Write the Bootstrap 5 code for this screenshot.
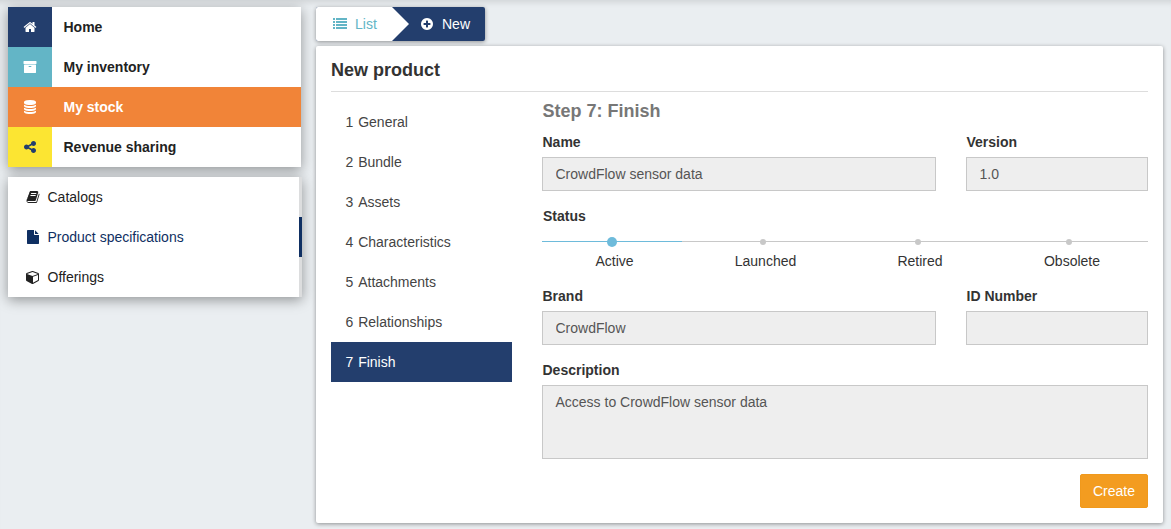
<!DOCTYPE html>
<html lang="en">
<head>
<meta charset="utf-8">
<meta name="viewport" content="width=device-width, initial-scale=1">
<title>New product</title>
<link href="https://cdn.jsdelivr.net/npm/bootstrap@5.3.0/dist/css/bootstrap.min.css" rel="stylesheet">
<style>
body{font:14px/20px "Liberation Sans",Arial,sans-serif;color:#333;background:#eaeef1;height:529px;overflow:hidden;padding:7px 8px 0;box-shadow:inset 0 7px 6px -5px rgba(0,0,0,.12)}
.ico{width:14px;height:14px;fill:currentColor;flex:none;display:block}
.side{width:293px;flex:none}
.main-col{width:847px;flex:none;margin-left:15px}
.menu-box{background:#fff;box-shadow:0 3px 12px rgba(0,0,0,.38)}
.menu-box a{height:40px;color:#222;text-decoration:none}
.areas a{font-weight:700}
.tile{width:44px;height:40px;color:#fff;margin-right:11.5px}
.navy{background:#233e6d}.teal{background:#63b5c6}.yellow{background:#fce532;color:#233e6d}
.areas a.current{background:#f18438;color:#fff}
.subs{margin-top:10px;width:294px}
.subs a{padding-left:17.5px;gap:8px;border-right:3px solid #dcddde}
.subs a.current{color:#0f2f62;border-color:#0f2f62}
.crumbs{width:169px;height:34px;border-radius:2px;overflow:hidden;background:#233e6d}
.crumb-wrap{width:169px;border-radius:2px;box-shadow:0 1px 4px rgba(0,0,0,.4)}
.crumb-list{width:93px;background:#fff;color:#63b5c6;padding-left:17px;gap:8px;clip-path:polygon(0 0,76px 0,93px 50%,76px 100%,0 100%)}
.crumb-new{color:#fff;padding-left:11px;gap:8px}
.panel{height:477px;margin-top:5px;background:#fff;border-radius:2px;box-shadow:0 1px 4px rgba(0,0,0,.4);padding:0 15px}
.panel h1{font-size:18px;line-height:20px;font-weight:700;margin:0;padding:14px 0 11px;border-bottom:1px solid #ddd}
.steps{width:181px;flex:none;padding-top:10px}
.steps div{height:40px;padding:10px 14.5px;color:#444;word-spacing:1px}
.steps div.current{background:#233e6d;color:#fff}
.form-area{width:606px;margin-left:30px;padding-top:9px}
.form-area h2{font-size:18px;line-height:20px;font-weight:700;margin:0 0 11px .5px;color:#777}
.form-area label{display:block;font-weight:700;line-height:20px;margin:0 0 5px .5px}
.form-area .form-control{height:34px;font-size:14px;line-height:20px;padding:6px 12px 6px 12.5px;border:1px solid #c8c8c8;border-radius:0;background:#eee;color:#555;resize:none;box-shadow:none}
.form-area textarea.form-control{height:74px}
.wide{width:394px}.narrow{width:182px}
.form-row{padding-top:15px}
.form-area .status-label{margin:0 0 15px 1px}
.track div{text-align:center;border-top:1px solid #c8c8c8;position:relative;padding:9px 0 0 5px;height:30px}
.track div::before{content:"";position:absolute;left:50%;top:-3px;width:6px;height:6px;margin-left:-3px;border-radius:50%;background:#c8c8c8}
.track div.current{border-color:#6ebbdb}
.track div.current::before{width:10px;height:10px;top:-5px;margin-left:-5px;background:#6ebbdb}
.s1{width:140px}.s2{width:162px}.s3{width:148px}.s4{width:156px}
.track .s3,.track .s4{padding-left:4px}
.track .s4::before{margin-left:-4px}
.btn-create{background:#f39c20;color:#fff;font-size:14px;line-height:20px;height:34px;width:68px;padding:6px 0;border:1px solid #f0991c;border-radius:2px}
</style>
</head>
<body>
<div class="d-flex align-items-start">
  <aside class="side">
    <nav class="menu-box areas">
      <a href="#" class="d-flex align-items-center"><span class="tile navy d-flex align-items-center justify-content-center"><svg class="ico" viewBox="0 0 1792 1792"><path d="M1472 992v480q0 26-19 45t-45 19h-384v-384h-256v384h-384q-26 0-45-19t-19-45v-480q0-1 .5-3t.5-3l575-474 575 474q1 2 1 6zm223-69l-62 74q-8 9-21 11h-3q-13 0-21-7l-692-577-692 577q-12 8-24 7-13-2-21-11l-62-74q-8-10-7-23.500t11-21.500l719-599q32-26 76-26t76 26l244 204v-195q0-14 9-23t23-9h192q14 0 23 9t9 23v408l219 182q10 8 11 21.500t-7 23.500z"/></svg></span>Home</a>
      <a href="#" class="d-flex align-items-center"><span class="tile teal d-flex align-items-center justify-content-center"><svg class="ico" viewBox="0 0 1792 1792"><path d="M1088 832q0-26-19-45t-45-19h-256q-26 0-45 19t-19 45 19 45 45 19h256q26 0 45-19t19-45zm576-192v960q0 26-19 45t-45 19h-1408q-26 0-45-19t-19-45v-960q0-26 19-45t45-19h1408q26 0 45 19t19 45zm64-448v256q0 26-19 45t-45 19h-1536q-26 0-45-19t-19-45v-256q0-26 19-45t45-19h1536q26 0 45 19t19 45z"/></svg></span>My inventory</a>
      <a href="#" class="d-flex align-items-center current"><span class="tile d-flex align-items-center justify-content-center"><svg class="ico" viewBox="0 0 1792 1792"><path d="M896 768q237 0 443-43t325-127v170q0 69-103 128t-280 93.500-385 34.500-385-34.500-280-93.500-103-128v-170q119 84 325 127t443 43zm0 768q237 0 443-43t325-127v170q0 69-103 128t-280 93.500-385 34.500-385-34.500-280-93.500-103-128v-170q119 84 325 127t443 43zm0-384q237 0 443-43t325-127v170q0 69-103 128t-280 93.500-385 34.500-385-34.500-280-93.500-103-128v-170q119 84 325 127t443 43zm0-1152q208 0 385 34.500t280 93.500 103 128v128q0 69-103 128t-280 93.500-385 34.500-385-34.500-280-93.500-103-128v-128q0-69 103-128t280-93.500 385-34.500z"/></svg></span>My stock</a>
      <a href="#" class="d-flex align-items-center"><span class="tile yellow d-flex align-items-center justify-content-center"><svg class="ico" viewBox="0 0 1792 1792"><path d="M1344 1024q133 0 226.500 93.500t93.500 226.500-93.500 226.500-226.500 93.500-226.500-93.500-93.500-226.500q0-12 2-34l-360-180q-92 86-218 86-133 0-226.500-93.500t-93.500-226.500 93.500-226.500 226.500-93.500q126 0 218 86l360-180q-2-22-2-34 0-133 93.500-226.500t226.500-93.500 226.500 93.500 93.500 226.500-93.500 226.500-226.500 93.500q-126 0-218-86l-360 180q2 22 2 34t-2 34l360 180q92-86 218-86z"/></svg></span>Revenue sharing</a>
    </nav>
    <nav class="menu-box subs">
      <a href="#" class="d-flex align-items-center"><svg class="ico" viewBox="0 0 1792 1792"><path d="M1703 478q40 57 18 129l-275 906q-19 64-76.500 107.500t-122.500 43.500h-923q-77 0-148.500-53.500t-99.500-131.500q-24-67-2-127 0-4 3-27t4-37q1-8-3-21.500t-3-19.500q2-11 8-21t16.500-23.500 16.500-23.500q23-38 45-91.500t30-91.500q3-10 .5-30t-.5-28q3-11 17-28t17-23q21-36 42-92t25-90q1-9-2.500-32t.5-28q4-13 22-30.500t22-22.500q19-26 42.500-84.500t27.500-96.500q1-8-3-25.500t-2-26.500q2-8 9-18t18-23 17-21q8-12 16.500-30.500t15-35 16-36 19.500-32 26.500-23.500 36-11.500 47.500 5.500l-1 3q38-9 51-9h761q74 0 114 56t18 130l-274 906q-36 119-71.500 153.500t-128.500 34.500h-869q-27 0-38 15-11 16-1 43 24 70 144 70h923q29 0 56-15.500t35-41.500l300-987q7-22 5-57 38 15 59 43zm-1064 2q-4 13 2 22.500t20 9.500h608q13 0 25.500-9.500t16.500-22.500l21-64q4-13-2-22.500t-20-9.500h-608q-13 0-25.500 9.500t-16.500 22.500zm-83 256q-4 13 2 22.500t20 9.500h608q13 0 25.500-9.500t16.500-22.500l21-64q4-13-2-22.500t-20-9.500h-608q-13 0-25.500 9.500t-16.500 22.500z"/></svg>Catalogs</a>
      <a href="#" class="d-flex align-items-center current"><svg class="ico" viewBox="0 0 1792 1792"><path d="M1152 512v-472q22 14 36 28l408 408q14 14 28 36h-472zm-128 32q0 40 28 68t68 28h544v1056q0 40-28 68t-68 28h-1344q-40 0-68-28t-28-68v-1600q0-40 28-68t68-28h800v544z"/></svg>Product specifications</a>
      <a href="#" class="d-flex align-items-center"><svg class="ico" viewBox="0 0 1792 1792"><path d="M896 1629l640-349v-636l-640 233v752zm-64-865l698-254-698-254-698 254zm832-252v768q0 35-18 65t-49 47l-704 384q-28 16-61 16t-61-16l-704-384q-31-17-49-47t-18-65v-768q0-40 23-73t61-47l704-256q22-8 44-8t44 8l704 256q38 14 61 47t23 73z"/></svg>Offerings</a>
    </nav>
  </aside>
  <main class="main-col">
    <div class="crumb-wrap"><div class="crumbs d-flex">
      <div class="crumb-list d-flex align-items-center"><svg class="ico" viewBox="0 0 14 14"><path d="M0 1h2v2H0zM3 1h11v2H3zM0 4h2v2H0zM3 4h11v2H3zM0 7h2v2H0zM3 7h11v2H3zM0 10h2v2H0zM3 10h11v2H3z"/></svg>List</div>
      <div class="crumb-new d-flex align-items-center"><svg class="ico" viewBox="0 0 1792 1792"><path d="M1344 960v-128q0-26-19-45t-45-19h-256v-256q0-26-19-45t-45-19h-128q-26 0-45 19t-19 45v256h-256q-26 0-45 19t-19 45v128q0 26 19 45t45 19h256v256q0 26 19 45t45 19h128q26 0 45-19t19-45v-256h256q26 0 45-19t19-45zm320-64q0 209-103 385.500t-279.500 279.500-385.500 103-385.500-103-279.500-279.500-103-385.500 103-385.500 279.500-279.500 385.500-103 385.500 103 279.500 279.500 103 385.500z"/></svg>New</div>
    </div></div>
    <section class="panel">
      <h1>New product</h1>
      <div class="d-flex">
        <div class="steps">
          <div>1&nbsp;General</div><div>2&nbsp;Bundle</div><div>3&nbsp;Assets</div><div>4&nbsp;Characteristics</div><div>5&nbsp;Attachments</div><div>6&nbsp;Relationships</div><div class="current">7&nbsp;Finish</div>
        </div>
        <form class="form-area">
          <h2>Step 7: Finish</h2>
          <div class="d-flex justify-content-between">
            <div class="wide"><label for="name">Name</label><input id="name" class="form-control" value="CrowdFlow sensor data" readonly></div>
            <div class="narrow"><label for="version">Version</label><input id="version" class="form-control" value="1.0" readonly></div>
          </div>
          <div class="form-row">
            <label class="status-label">Status</label>
            <div class="track d-flex">
              <div class="current s1">Active</div><div class="s2">Launched</div><div class="s3">Retired</div><div class="s4">Obsolete</div>
            </div>
          </div>
          <div class="d-flex justify-content-between form-row">
            <div class="wide"><label for="brand">Brand</label><input id="brand" class="form-control" value="CrowdFlow" readonly></div>
            <div class="narrow"><label for="idn">ID Number</label><input id="idn" class="form-control" readonly></div>
          </div>
          <div class="form-row"><label for="desc">Description</label><textarea id="desc" class="form-control d-block" readonly>Access to CrowdFlow sensor data</textarea></div>
          <div class="text-end form-row"><button type="button" class="btn btn-create">Create</button></div>
        </form>
      </div>
    </section>
  </main>
</div>
<script src="https://cdn.jsdelivr.net/npm/bootstrap@5.3.0/dist/js/bootstrap.bundle.min.js"></script>
</body>
</html>
